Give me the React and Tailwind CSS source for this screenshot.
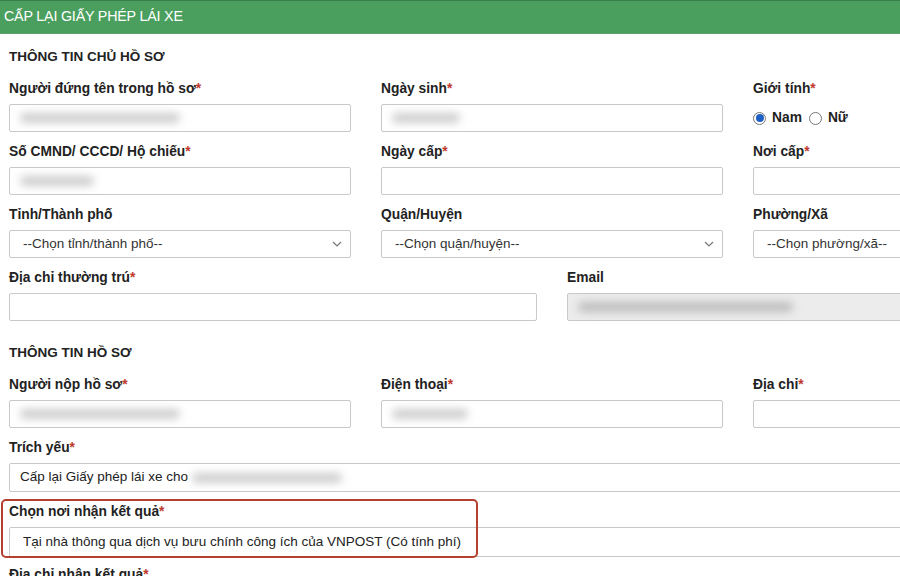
import React from "react";

function Req() {
  return <span className="text-[#c0392b]">*</span>;
}

function Label({ children, req }) {
  return (
    <div className="h-4 leading-4 text-[13.8px] font-bold text-[#222] whitespace-nowrap mb-[7px]">
      {children}
      {req && <Req />}
    </div>
  );
}

function Blur({ w, gray }) {
  return (
    <div
      className={`h-[10px] rounded-full blur-[4px] ${gray ? "bg-[#bdbdbd]" : "bg-[#cdcdcd]"}`}
      style={{ width: w }}
    />
  );
}

function Input({ blur, bg, children, h = "h-[28px]" }) {
  return (
    <div
      className={`${h} border border-[#c9c9c9] rounded-[2px] flex items-center px-[10px] text-[13.5px] text-[#222] ${
        bg || "bg-white"
      }`}
    >
      {blur && <Blur w={blur} />}
      {children}
    </div>
  );
}

function Select({ text }) {
  return (
    <div className="h-[28px] border border-[#c9c9c9] rounded-[2px] bg-white flex items-center justify-between pl-[13px] pr-[8px] text-[13.5px] text-[#333]">
      <span>{text}</span>
      <svg width="10" height="6" viewBox="0 0 10 6" fill="none">
        <path d="M1 1l4 4 4-4" stroke="#777" strokeWidth="1.2" />
      </svg>
    </div>
  );
}

function Radio({ checked }) {
  return (
    <span className="w-[13px] h-[13px] rounded-full border border-[#777] flex items-center justify-center bg-white">
      {checked && <span className="w-[8px] h-[8px] rounded-full bg-[#1f5fc4]" />}
    </span>
  );
}

export default function App() {
  return (
    <div
      className="w-[900px] h-[576px] overflow-hidden bg-white"
      style={{ fontFamily: '"Liberation Sans", Arial, sans-serif' }}
    >
      <div className="h-[34px] bg-[#4a9f5e] border-t border-[#3a7d4a] border-b border-b-[#5c9f68] flex items-center pl-[4px] text-white text-[14.3px] tracking-[-0.2px]">
        CẤP LẠI GIẤY PHÉP LÁI XE
      </div>

      <div className="pl-[9px] w-[1200px]">
        <div className="mt-[15px] h-4 leading-4 text-[13.5px] font-bold text-[#222]">
          THÔNG TIN CHỦ HỒ SƠ
        </div>

        <div className="mt-[16px] grid grid-cols-[342px_342px_342px] gap-x-[30px] gap-y-[12px]">
          <div>
            <Label req>Người đứng tên trong hồ sơ</Label>
            <Input blur={160} />
          </div>
          <div>
            <Label req>Ngày sinh</Label>
            <Input blur={68} />
          </div>
          <div>
            <Label req>Giới tính</Label>
            <div className="h-[28px] flex items-center gap-[6px] text-[13.8px] font-bold text-[#222]">
              <Radio checked />
              <span className="mr-[1px]">Nam</span>
              <Radio />
              <span>Nữ</span>
            </div>
          </div>

          <div>
            <Label req>Số CMND/ CCCD/ Hộ chiếu</Label>
            <Input blur={74} />
          </div>
          <div>
            <Label req>Ngày cấp</Label>
            <Input />
          </div>
          <div>
            <Label req>Nơi cấp</Label>
            <Input />
          </div>

          <div>
            <Label>Tỉnh/Thành phố</Label>
            <Select text="--Chọn tỉnh/thành phố--" />
          </div>
          <div>
            <Label>Quận/Huyện</Label>
            <Select text="--Chọn quận/huyện--" />
          </div>
          <div>
            <Label>Phường/Xã</Label>
            <Select text="--Chọn phường/xã--" />
          </div>
        </div>

        <div className="mt-[12px] grid grid-cols-[528px_528px] gap-x-[30px]">
          <div>
            <Label req>Địa chỉ thường trú</Label>
            <Input />
          </div>
          <div>
            <Label>Email</Label>
            <Input bg="bg-[#ececec]">
              <Blur w={215} gray />
            </Input>
          </div>
        </div>

        <div className="mt-[24px] h-4 leading-4 text-[13.5px] font-bold text-[#222]">
          THÔNG TIN HỒ SƠ
        </div>

        <div className="mt-[16px] grid grid-cols-[342px_342px_342px] gap-x-[30px]">
          <div>
            <Label req>Người nộp hồ sơ</Label>
            <Input blur={160} />
          </div>
          <div>
            <Label req>Điện thoại</Label>
            <Input blur={76} />
          </div>
          <div>
            <Label req>Địa chỉ</Label>
            <Input />
          </div>
        </div>

        <div className="mt-[12px]">
          <Label req>Trích yếu</Label>
          <Input h="h-[29px]">
            <span className="mr-[4px]">Cấp lại Giấy phép lái xe cho</span>
            <Blur w={150} />
          </Input>
        </div>

        <div className="relative mt-[12px]">
          <div className="absolute left-[-8px] top-[-5px] w-[477px] h-[59px] border-2 border-[#b4412f] rounded-[5px] pointer-events-none" />
          <Label req>Chọn nơi nhận kết quả</Label>
          <Input h="h-[30px]">
            <span className="pl-[3px]">
              Tại nhà thông qua dịch vụ bưu chính công ích của VNPOST (Có tính phí)
            </span>
          </Input>
        </div>

        <div className="mt-[10px]">
          <Label req>Địa chỉ nhận kết quả</Label>
          <Input />
        </div>
      </div>
    </div>
  );
}
